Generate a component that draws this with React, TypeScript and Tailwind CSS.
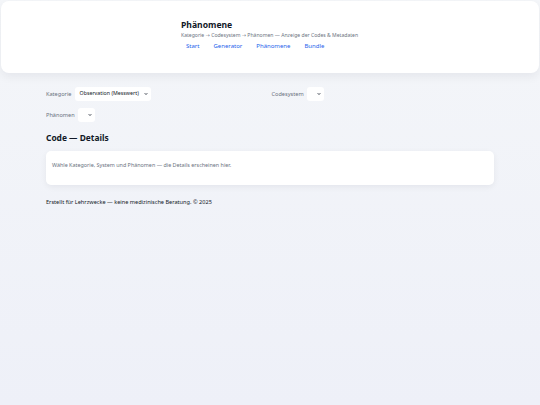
import { ChevronDown } from "lucide-react";

const font = { fontFamily: '"Noto Sans", "Open Sans", sans-serif' };
const arrow = { fontFamily: '"DejaVu Sans", sans-serif' };

const Select = ({ value, width }: { value?: string; width: string }) => (
  <div className={`flex h-[14px] items-center justify-between rounded-[3px] bg-white pl-[5px] pr-[2.5px] ${width}`}>
    <span className="text-[5.3px] text-[#111827]">{value}</span>
    <ChevronDown className="h-[4px] w-[4px] text-[#111827]" strokeWidth={5} />
  </div>
);

export default function App() {
  return (
    <div style={font} className="min-h-[405px] bg-gradient-to-b from-[#f4f6f9] to-[#eef0f8] pt-px">
      <header className="mx-px h-[72px] rounded-[8px] bg-white pl-[180px] pt-[18px] shadow-[0_4px_10px_rgba(15,23,42,0.06)]">
        <h1 className="text-[8.6px] font-bold leading-[12px] text-[#111827]">Phänomene</h1>
        <p className="mt-[1px] text-[5.1px] leading-[7px] text-[#6b7280]">
          Kategorie <span style={arrow}>→</span> Codesystem <span style={arrow}>→</span> Phänomen — Anzeige der Codes &amp; Metadaten
        </p>
        <nav className="mt-[1px] flex gap-[4px] text-[6px] font-normal text-[#2563eb]">
          <a className="px-[5px] py-[2px]">Start</a>
          <a className="px-[5px] py-[2px]">Generator</a>
          <a className="px-[5px] py-[2px]">Phänomene</a>
          <a className="px-[5px] py-[2px]">Bundle</a>
        </nav>
      </header>

      <main className="mx-[46px] mt-[14px]">
        <div className="grid grid-cols-2 gap-x-[3px]">
          <label className="flex items-center gap-[3px] text-[5.6px] text-[#6b7280]">
            Kategorie
            <Select value="Observation (Messwert)" width="w-[76px]" />
          </label>
          <label className="flex items-center gap-[3px] text-[5.6px] text-[#6b7280]">
            Codesystem
            <Select width="w-[17px]" />
          </label>
        </div>
        <label className="mt-[7px] flex items-center gap-[3px] text-[5.6px] text-[#6b7280]">
          Phänomen
          <Select width="w-[17px]" />
        </label>

        <h2 className="mt-[10px] text-[8.4px] font-bold leading-[12px] text-[#111827]">Code — Details</h2>
        <div className="mt-[7px] h-[34px] rounded-[5px] bg-white px-[6px] pt-[10px] shadow-[0_2px_6px_rgba(15,23,42,0.06)]">
          <p className="text-[5.4px] leading-[8px] text-[#6b7280]">
            Wähle Kategorie, System und Phänomen — die Details erscheinen hier.
          </p>
        </div>

        <footer className="mt-[13px] text-[5.6px] text-[#111827]">
          Erstellt für Lehrzwecke — keine medizinische Beratung. © 2025
        </footer>
      </main>
    </div>
  );
}
